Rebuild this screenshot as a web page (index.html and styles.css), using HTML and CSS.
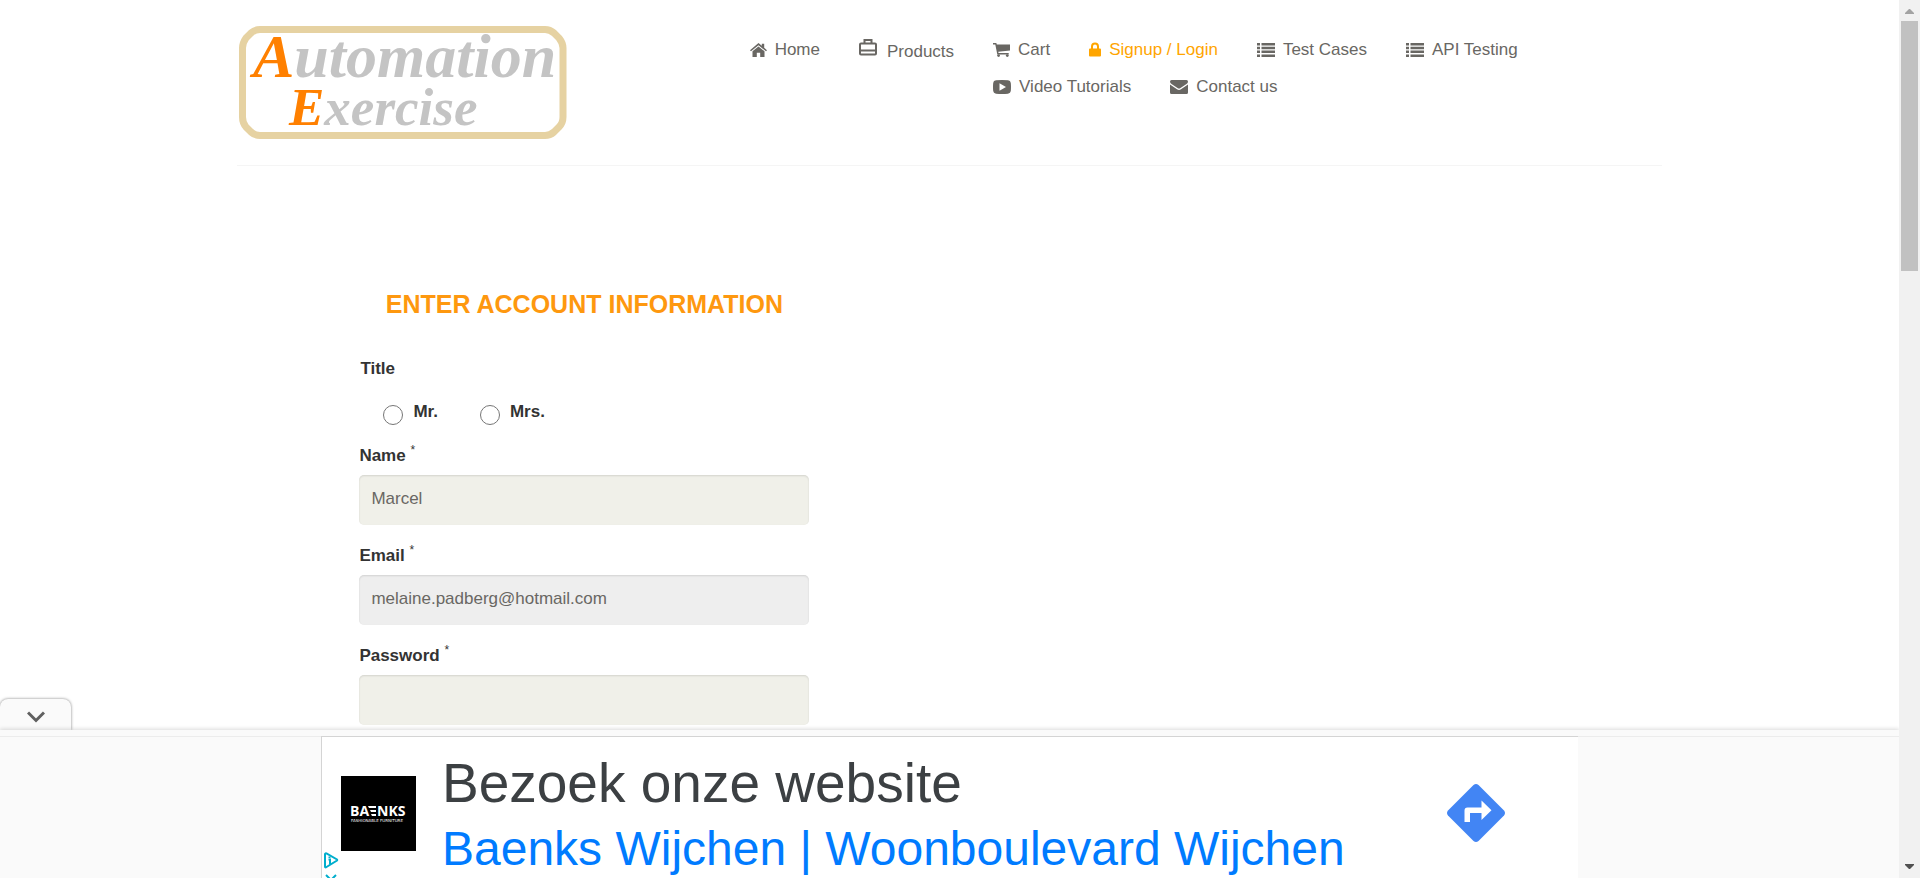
FILE: index.html
```html
<!DOCTYPE html>
<html lang="en">
<head>
<meta charset="utf-8">
<title>Automation Exercise - Signup</title>
<link rel="stylesheet" href="styles.css">
</head>
<body>
<div class="viewport">
  <div class="page">
    <header class="header container">
      <a class="logo" href="#" aria-label="Automation Exercise">
        <svg width="327" height="113" viewBox="0 0 327 113">
          <path class="logo-frame" d="M21 3.500H306Q311 3.500 315 7L320 12Q324 17 324 22V91Q324 97 320 101L315 106Q311 109.500 306 109.500H21Q16 109.500 12 106L7 101Q3.500 97 3.500 91V22Q3.500 17 7 12L12 7Q16 3.500 21 3.500Z"/>
          <text class="logo-text" x="14" y="51" font-size="62"><tspan class="logo-cap">A</tspan>utomation</text>
          <text class="logo-text" x="50" y="99" font-size="53"><tspan class="logo-cap">E</tspan>xercise</text>
        </svg>
      </a>
      <nav class="nav">
        <ul>
          <li><a href="#"><svg width="17" height="14" viewBox="0 0 17 14"><path d="M8.500 0 11.800 2.800V.8h2.400v4L17 7.200l-1 1.100L8.500 2.200 1 8.300 0 7.200z"/><path d="M8.500 3.400 14.500 8.300V14h-4.300V9.700H6.800V14H2.500V8.300z"/></svg>Home</a></li>
          <li class="tall"><a href="#"><svg width="18" height="17" viewBox="0 0 18 17"><path class="line" d="M2 4.500H16Q17 4.500 17 5.500V14.500Q17 15.500 16 15.500H2Q1 15.500 1 14.500V5.500Q1 4.500 2 4.500ZM5.500 4.500V1H12.500V4.500M1 11.500H17"/></svg>Products</a></li>
          <li><a href="#"><svg width="17" height="14" viewBox="0 0 17 14"><path d="M0 0h3.300l.5 1.600H17v5.800L5.300 8.800l.2 1.200H15.700v1.400H4.300L2.300 1.400H0z"/><circle cx="5.600" cy="12.600" r="1.400"/><circle cx="14.300" cy="12.600" r="1.400"/></svg>Cart</a></li>
          <li><a class="active" href="#"><svg width="12" height="15" viewBox="0 0 12 15"><path d="M1 6.500h1V4.500a4 4 0 0 1 8 0v2h1q1 0 1 1v6q0 1-1 1H1q-1 0-1-1v-6q0-1 1-1ZM4 6.500h4V4.500a2 2 0 0 0-4 0z"/></svg>Signup / Login</a></li>
          <li><a href="#"><svg width="18" height="14" viewBox="0 0 18 14"><path d="M0 0h3v2.500H0zM4.500 0H18v2.500H4.500zM0 3.800h3v2.500H0zM4.500 3.800H18v2.500H4.500zM0 7.600h3v2.500H0zM4.500 7.600H18v2.500H4.500zM0 11.400h3v2.500H0zM4.500 11.400H18v2.500H4.500z"/></svg>Test Cases</a></li>
          <li><a href="#"><svg width="18" height="14" viewBox="0 0 18 14"><path d="M0 0h3v2.500H0zM4.500 0H18v2.500H4.500zM0 3.800h3v2.500H0zM4.500 3.800H18v2.500H4.500zM0 7.600h3v2.500H0zM4.500 7.600H18v2.500H4.500zM0 11.400h3v2.500H0zM4.500 11.400H18v2.500H4.500z"/></svg>API Testing</a></li>
          <li><a href="#"><svg width="18" height="14" viewBox="0 0 18 14"><path fill-rule="evenodd" d="M3 .3Q9-.3 15 .3Q17.600.6 17.800 3Q18.200 7 17.800 11Q17.600 13.400 15 13.700Q9 14.300 3 13.700Q.4 13.400.2 11Q-.2 7 .2 3Q.4.6 3 .3ZM6.500 3.300v7.400L13 7z"/></svg>Video Tutorials</a></li>
          <li><a href="#"><svg width="18" height="14" viewBox="0 0 18 14"><path d="M1.500 0h15Q18 0 18 1.500 18 3 16.500 4L10.500 8Q9 9 7.500 8L1.500 4Q0 3 0 1.500 0 0 1.500 0Z"/><path d="M0 4.500 7 9.300Q9 10.500 11 9.300L18 4.500V12.500Q18 14 16.500 14h-15Q0 14 0 12.500z"/></svg>Contact us</a></li>
        </ul>
      </nav>
    </header>

    <main class="container">
      <form class="account">
        <h2>Enter Account Information</h2>
        <fieldset>
          <legend>Title</legend>
          <div class="choices">
            <label><input type="radio" name="title" value="Mr">Mr.</label>
            <label><input type="radio" name="title" value="Mrs">Mrs.</label>
          </div>
        </fieldset>
        <div class="field">
          <label for="name">Name <sup>*</sup></label>
          <input id="name" type="text" value="Marcel">
        </div>
        <div class="field">
          <label for="email">Email <sup>*</sup></label>
          <input id="email" type="text" value="melaine.padberg@hotmail.com" disabled>
        </div>
        <div class="field">
          <label for="password">Password <sup>*</sup></label>
          <input id="password" type="password">
        </div>
      </form>
    </main>

    <aside class="anchor-ad">
      <button class="ad-toggle" type="button" aria-label="Hide advertisement">
        <svg width="18" height="12" viewBox="0 0 18 12"><path d="M1 1.500 9 9.500 17 1.500"/></svg>
      </button>
      <div class="ad-bar">
        <div class="ad">
          <a class="ad-brand" href="#">
            <svg width="75" height="75" viewBox="0 0 75 75" aria-label="Baenks">
              <text class="brand-name" x="9" y="40">BA</text>
              <path d="M27 30h8v2h-7zM29 34h6v2h-5zM30 38h5v2h-4z"/>
              <text class="brand-name" x="36" y="40">NKS</text>
              <text class="brand-tag" x="10" y="46">FASHIONABLE FURNITURE</text>
            </svg>
          </a>
          <div class="ad-copy">
            <a class="ad-title" href="#">Bezoek onze website</a>
            <a class="ad-sub" href="#">Baenks Wijchen | Woonboulevard Wijchen</a>
          </div>
          <a class="ad-go" href="#" aria-label="Directions">
            <svg width="58" height="58" viewBox="0 0 58 58"><path fill="#4285f4" d="M26.500 1Q29-1 31.500 1L57 26.500Q59 29 57 31.500L31.500 57Q29 59 26.500 57L1 31.500Q-1 29 1 26.500Z"/><path fill="#fff" d="M17.500 38V26.500Q17.500 23.500 20.500 23.500H34.500V16.500L44.500 26.200 34.500 36V29H23V38Z"/></svg>
          </a>
          <svg class="ad-choices" width="16" height="30" viewBox="0 0 16 30"><path d="M2 1.500V14.500Q2 16 3.500 15L14 8.500Q14.500 8 14 7.500L3.500 1.500Q2 1 2 2.500Z"/><path d="M6.500 4.500v1.500M5.500 7.500H7V12.500M3 23 8 28 13 23"/></svg>
        </div>
      </div>
    </aside>
  </div>
  <div class="scrollbar" aria-hidden="true">
    <svg width="9" height="5" viewBox="0 0 9 5"><path fill="#a3a3a3" d="M4 0h1L9 4v1H0V4z"/></svg>
    <div class="thumb"></div>
    <svg width="9" height="5" viewBox="0 0 9 5"><path fill="#505050" d="M0 0h9v1L5 5H4L0 1z"/></svg>
  </div>
</div>
</body>
</html>
```
FILE: styles.css
```css
* { box-sizing: border-box; }
body {
  margin: 0;
  font: 17px/25px "Liberation Sans", Arial, sans-serif;
  color: #696763;
  background: #fff;
}
a { color: inherit; text-decoration: none; }
svg { display: block; flex: none; }

.viewport { display: flex; height: 100vh; overflow: hidden; }
.page { position: relative; flex: 1; min-width: 0; overflow: hidden; }
.container { width: 75%; margin: 0 auto; }

.header {
  display: flex;
  justify-content: space-between;
  padding: 26px 0 26px 2px;
  border-bottom: 1px solid #f5f5f5;
}
.logo svg { overflow: visible; }
.logo-frame { fill: none; stroke: #e6d2a2; stroke-width: 7; }
.logo-text { font-family: "Liberation Serif", serif; font-style: italic; font-weight: bold; fill: #c4c4c4; }
.logo-cap { fill: #ff8000; }

.nav { width: 912px; padding-top: 11px; }
.nav ul { margin: 0; padding: 0; list-style: none; }
.nav li { float: left; height: 37px; padding-right: 39px; }
.nav li.tall { height: 40px; padding-top: 2px; }
.nav a { display: flex; align-items: center; gap: 8px; }
.nav svg { fill: currentColor; }
.nav .active { color: orange; }
.nav .tall a { gap: 10px; align-items: flex-start; }
.nav .line { fill: none; stroke: currentColor; stroke-width: 2; }

.account { width: 450px; margin: 122px 0 0 122px; color: #333; }
h2 {
  margin: 0 0 36px;
  font-size: 25px;
  line-height: 32px;
  text-align: center;
  text-transform: uppercase;
  color: #fe980f;
}
fieldset { margin: 0; padding: 0; border: 0; }
legend, label { font-weight: bold; }
legend { padding: 0 1px; }
.choices { display: flex; gap: 42px; padding: 18px 0 19px 24px; }
.choices label { display: flex; gap: 10px; }
.choices input { width: 20px; height: 20px; margin: 6px 0 0; }
.field { margin-bottom: 19px; }
.field label { display: block; height: 31px; line-height: 23px; }
sup { font-size: 12px; font-weight: normal; line-height: 0; }
.field input {
  display: block;
  width: 100%;
  height: 50px;
  padding: 0 12px 3px;
  border: 0;
  border-radius: 5px;
  background: #f0f0e9;
  box-shadow: inset 0 1px 2px rgba(0, 0, 0, .12);
  font: inherit;
  color: #696763;
}
.field input:disabled { background: #eee; }

.anchor-ad { position: absolute; left: 0; right: 0; bottom: 0; }
.ad-toggle {
  display: flex;
  align-items: center;
  justify-content: center;
  width: 71px;
  height: 31px;
  padding: 4px 0 0;
  border: 0;
  border-radius: 8px 8px 0 0;
  background: #fafafa;
  box-shadow: 0 0 3px rgba(0, 0, 0, .5);
}
.ad-toggle path { fill: none; stroke: #606060; stroke-width: 3; }
.ad-bar {
  position: relative;
  height: 148px;
  padding-top: 6px;
  background: #fafafa;
  box-shadow: 0 -1px 4px rgba(0, 0, 0, .15);
}
.ad-bar::before {
  content: "";
  display: block;
  height: 1px;
  background: #ececec;
  margin-bottom: -1px;
}
.ad {
  position: relative;
  display: flex;
  width: 1257px;
  max-width: 100%;
  height: 142px;
  margin: 0 auto;
  padding-left: 19px;
  border: solid #d4d4d4;
  border-width: 1px 0 0 1px;
  background: #fff;
}
.ad-brand { align-self: flex-start; margin: 39px 26px 0 0; background: #000; }
.ad-brand svg { fill: #fff; }
.brand-name { font: bold 14px "Open Sans", sans-serif; }
.brand-tag { font: 4px "DejaVu Sans", sans-serif; }
.ad-copy { display: flex; flex: 1; flex-direction: column; padding-top: 14px; white-space: nowrap; }
.ad-title { font-size: 55px; line-height: 64px; color: #3c4043; }
.ad-sub { font-size: 48px; line-height: 68px; color: #007bff; }
.ad-go { margin: 47px 73px 0 0; }
.ad-choices { position: absolute; left: 1px; top: 115px; fill: none; stroke: #00aecd; stroke-width: 2; }

.scrollbar {
  display: flex;
  flex-direction: column;
  align-items: center;
  width: 21px;
  padding: 9px 0;
  background: #f1f1f1;
}
.thumb { width: 17px; height: 250px; margin: 7px 0 auto; background: #c1c1c1; }
```
